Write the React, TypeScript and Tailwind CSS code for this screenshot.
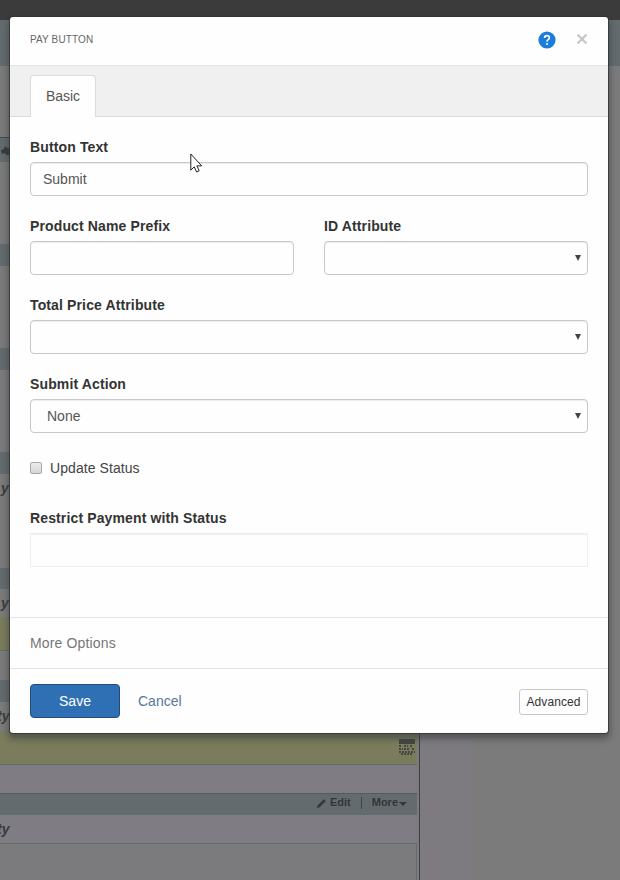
import { useState } from 'react'
import type { ReactNode } from 'react'

// Rows of the form builder that sit behind the dialog
const pageRows = [
  { box: 'h-[71px] bg-[#7b7b7b]' },
  { box: 'h-[25px] bg-[#646b6e] border-t border-[#454747]', mark: true },
  { box: 'h-[82px] bg-[#7b7b7b]' },
  { box: 'h-[22px] bg-[#646b6e]' },
  { box: 'h-[82px] bg-[#7b7b7b]' },
  { box: 'h-[22px] bg-[#646b6e]' },
  { box: 'h-[82px] bg-[#7b7a7c]' },
  { box: 'h-[22px] bg-[#646b6e]' },
  { box: 'h-[94px] bg-[#7b7b7b] pt-1', text: 'y' },
  { box: 'h-[21px] bg-[#646b6e]' },
  { box: 'h-[28px] bg-[#7b7b7b] pt-1', text: 'y' },
  { box: 'h-[34px] bg-[#7b7c5c] border-b border-[#646b6e]' },
  { box: 'h-[29px] bg-[#7b7b7b]' },
  { box: 'h-[22px] bg-[#646b6e]' },
  { box: 'h-[29px] bg-[#7b7b7b] pt-1', text: 'ty' },
]

function Field({ label, children }: { label: string; children: ReactNode }) {
  return (
    <div className="flex-1 mb-5">
      <label className="block mb-[5px] text-sm leading-5 font-bold tracking-[0.13px] text-[#333]">{label}</label>
      {children}
    </div>
  )
}

function Select({ value = '' }: { value?: string }) {
  return (
    <div className="flex h-[34px] items-center justify-between rounded border border-[#c8c8c8] pl-4 pr-1.5 text-sm text-[#555] shadow-[inset_0_1px_1px_rgba(0,0,0,0.075)]">
      <span>{value}</span>
      <svg width="6" height="6" viewBox="0 0 6 6" fill="#444">
        <path d="M0 0h6L3 6z" />
      </svg>
    </div>
  )
}

function RowText({ text }: { text: string }) {
  return (
    <span className={`block w-fit text-sm leading-5 font-bold italic text-[#3a3b3a] ${text === 'ty' ? '-ml-[3px]' : 'ml-px'}`}>
      {text}
    </span>
  )
}

function Page() {
  return (
    <div className="h-full bg-[#7b7b7b]">
      <div className="h-5 bg-[#3a3b3a]" />
      <div className="h-[46px] bg-[#646b6e]" />
      <div className="flex h-[814px]">
        <div className="w-[420px] border-r border-[#3d3f40] pr-[2px]">
          {pageRows.map((row, index) => (
            <div key={index} className={row.box}>
              {row.text && <RowText text={row.text} />}
              {row.mark && (
                <svg className="ml-[1px] block" width="9" height="24" viewBox="0 0 9 24" fill="#3a3b3a">
                  <path d="M0 12l3-1 1-3 2 2h3v7H5l-1-2-3 1z" />
                </svg>
              )}
            </div>
          ))}
          <div className="flex h-[34px] justify-end border-b border-[#646b6e] bg-[#7b7c5c] pr-[2px] pt-[8px]">
            {/* Keypad */}
            <svg width="16" height="16" viewBox="0 0 16 16" fill="none" stroke="#454742">
              <path d="M0 2.5h16" strokeWidth="5" />
              <path d="M0 7h3m2 0h4m2 0h3M0 10h4m1 0h6m2 0h3M0 13h16M2 15h12" strokeWidth="2" strokeDasharray="2 1" />
            </svg>
          </div>
          <div className="h-[28px] bg-[#7f7c83]" />
          <div className="flex h-[22px] items-center justify-end border-t border-[#555a5c] bg-[#646b6e] pr-[10px] pb-[4px] text-[11px] text-[#343637]">
            <svg className="mr-1 mt-px" width="9" height="9" viewBox="0 0 10 10" fill="#343637">
              <path d="M0 10l.8-3L7 .8Q8 0 9 1t0 2L3 9.2z" />
            </svg>
            <span className="font-bold">Edit</span>
            <span className="mx-[10px] h-3 w-px bg-[#3f4243]" />
            <span className="font-bold">More</span>
            <svg className="ml-px mt-[3px]" width="8" height="4" viewBox="0 0 8 4" fill="#343637">
              <path d="M0 0h8L4 4z" />
            </svg>
          </div>
          <div className="h-[29px] border-b border-[#646b6e] bg-[#7f7c83] pt-1">
            <RowText text="ty" />
          </div>
          <div className="h-[36px] border-r border-[#646b6e] bg-[#7b7a7c]" />
        </div>
        <div className="w-[52px] bg-[#7d7b7f]" />
      </div>
    </div>
  )
}

export default function App() {
  const [buttonText, setButtonText] = useState('Submit')

  return (
    <div className="relative h-[880px] w-[620px] overflow-hidden font-['Liberation_Sans',Arial,sans-serif]">
      <Page />

      {/* Dialog */}
      <div className="absolute left-[10px] top-[17px] w-[598px] rounded-[3px] bg-[#fefefe] shadow-[0_0_0_1px_rgba(45,47,48,0.7),0_4px_6px_2px_rgba(50,55,58,0.55)]">
        <header className="flex h-[49px] items-center border-b border-[#e4e4e4] px-5 pb-1">
          <h1 className="flex-1 text-[10px] tracking-[0.12px] text-[#666]">PAY BUTTON</h1>
          <svg className="mr-5 mt-[2px]" width="18" height="18" viewBox="0 0 18 18">
            <circle cx="9" cy="9" r="8.6" fill="#1c7cd9" />
            <path d="M6.6 7.1Q6.6 4.6 9 4.6t2.4 2.2Q11.4 8 10 8.9 9 9.6 9 10.7" fill="none" stroke="#fff" strokeWidth="1.6" />
            <circle cx="9" cy="13" r="1" fill="#fff" />
          </svg>
          <svg width="12" height="10" viewBox="0 0 12 10" stroke="#c7c7c7" strokeWidth="2.2">
            <path d="M1.5.5l9 9M10.5.5l-9 9" />
          </svg>
        </header>

        <div className="flex h-[51px] items-end border-b border-[#e0d9e0] bg-[#f0f0f0] pl-5">
          <div className="-mb-px flex h-[42px] w-[66px] items-center justify-center rounded-t border border-b-0 border-[#e0d9e0] bg-[#fefefe] pb-[2px] text-sm text-[#555]">
            Basic
          </div>
        </div>

        <div className="h-[500px] px-5 pt-5">
          <Field label="Button Text">
            <input
              value={buttonText}
              onChange={(e) => setButtonText(e.target.value)}
              className="block h-[34px] w-full rounded border border-[#c8c8c8] px-3 text-sm text-[#555] shadow-[inset_0_1px_1px_rgba(0,0,0,0.075)]"
            />
          </Field>
          <div className="flex gap-[30px]">
            <Field label="Product Name Prefix">
              <input className="block h-[34px] w-full rounded border border-[#c8c8c8] px-3 text-sm shadow-[inset_0_1px_1px_rgba(0,0,0,0.075)]" />
            </Field>
            <Field label="ID Attribute">
              <Select />
            </Field>
          </div>
          <Field label="Total Price Attribute">
            <Select />
          </Field>
          <Field label="Submit Action">
            <Select value="None" />
          </Field>
          <div className="mt-[25px] mb-[30px] flex h-5 items-center gap-2 text-sm tracking-[0.07px] text-[#444]">
            <span className="h-3 w-3 rounded-[2px] border border-[#a9a9a9] bg-linear-to-b from-[#ececec] to-[#d6d6d6]" />
            Update Status
          </div>
          <Field label="Restrict Payment with Status">
            <div className="h-[34px] border border-t-2 border-[#efefef]" />
          </Field>
        </div>

        <div className="flex h-[51px] items-center border-t border-[#e4e4e4] px-5 text-sm tracking-[0.15px] text-[#777]">More Options</div>

        <footer className="flex h-[65px] items-center border-t border-[#e4e4e4] px-5">
          <button className="h-[34px] w-[90px] rounded border border-[#204d7c] bg-[#2f70b5] text-sm text-white">Save</button>
          <button className="ml-[18px] flex-1 text-left text-sm text-[#55789b]">Cancel</button>
          <button className="mt-[2px] h-[26px] w-[69px] rounded-[3px] border border-[#c8c8c8] text-xs tracking-[0.1px] text-[#333]">Advanced</button>
        </footer>
      </div>

      {/* Mouse pointer */}
      <svg className="absolute left-[190px] top-[153px]" width="13" height="20" viewBox="0 0 13 20">
        <path d="M.8 1v16.2l3.4-3.4L6.6 19l2.6-1.2-2.3-4.9h4.8z" fill="#fff" stroke="#222" />
      </svg>
    </div>
  )
}
